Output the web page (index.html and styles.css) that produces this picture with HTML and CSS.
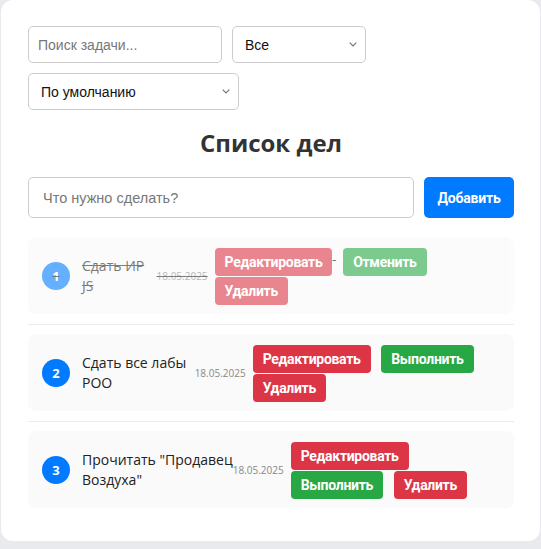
FILE: index.html
```html
<!DOCTYPE html>
<html lang="ru">
<head>
<meta charset="utf-8">
<title>Список дел</title>
<link rel="stylesheet" href="styles.css">
</head>
<body>
<div class="card">
  <div class="filters">
    <input class="search" type="text" placeholder="Поиск задачи...">
    <select class="filter"><option>Все</option><option>Активные</option><option>Выполненные</option></select>
    <select class="sort"><option>По умолчанию</option><option>По дате</option></select>
  </div>
  <h2 class="title">Список дел</h2>
  <div class="add-row">
    <input class="add-input" type="text" placeholder="Что нужно сделать?">
    <button class="btn-add">Добавить</button>
  </div>
  <ul class="list">
    <li class="item done">
      <div class="task">
        <span class="num">1</span>
        <span class="text">Сдать ИР JS</span>
        <span class="date">18.05.2025</span>
        <div class="actions"> <button class="btn btn-red">Редактировать</button> <button class="btn btn-green">Отменить</button> <button class="btn btn-red">Удалить</button> </div>
      </div>
    </li>
    <li class="item">
      <div class="task">
        <span class="num">2</span>
        <span class="text">Сдать все лабы РОО</span>
        <span class="date">18.05.2025</span>
        <div class="actions"> <button class="btn btn-red">Редактировать</button> <button class="btn btn-green">Выполнить</button> <button class="btn btn-red">Удалить</button> </div>
      </div>
    </li>
    <li class="item">
      <div class="task">
        <span class="num">3</span>
        <span class="text">Прочитать&nbsp;"Продавец Воздуха"</span>
        <span class="date">18.05.2025</span>
        <div class="actions"> <button class="btn btn-red">Редактировать</button> <button class="btn btn-green">Выполнить</button> <button class="btn btn-red">Удалить</button> </div>
      </div>
    </li>
  </ul>
</div>
</body>
</html>
```
FILE: styles.css
```css
body {
  margin: 0;
  background: #e9eaee;
  font-family: "Open Sans", "Noto Sans", sans-serif;
  color: #222;
}

.card {
  background: #fff;
  margin: 0 1px 6px;
  border-radius: 12px;
  padding: 26px 26px 33px 27px;
}

.filters {
  display: flex;
  flex-wrap: wrap;
  gap: 10px;
}

.search,
.filter,
.sort,
.add-input {
  box-sizing: border-box;
  border: 1px solid #ccc;
  border-radius: 5px;
  background-color: #fff;
  font-family: "Liberation Sans", Arial, sans-serif;
  color: #111;
}

.search {
  width: 194px;
  height: 37px;
  padding: 0 9px;
  font-size: 14px;
}

.filter,
.sort {
  appearance: none;
  -webkit-appearance: none;
  height: 37px;
  padding: 0 8px 0 12px;
  font-size: 14px;
  background-image: url("data:image/svg+xml,%3Csvg xmlns='http://www.w3.org/2000/svg' width='8' height='5' viewBox='0 0 8 5'%3E%3Cpath d='M0.7 0.7 L4 4 L7.3 0.7' fill='none' stroke='%23777' stroke-width='1.2'/%3E%3C/svg%3E");
  background-repeat: no-repeat;
  background-position: right 8px center;
  background-size: 8px 5px;
}

.filter { width: 134px; }
.sort { width: 211px; }

.search::placeholder,
.add-input::placeholder {
  color: #777;
}

.title {
  margin: 15px 0 17px;
  text-align: center;
  font-size: 24px;
  font-weight: 700;
  color: #333;
  line-height: 35px;
}

.add-row {
  display: flex;
  gap: 10px;
}

.add-input {
  flex: 1;
  height: 41px;
  padding: 0 14px;
  font-size: 14.5px;
}

.btn-add {
  width: 90px;
  height: 41px;
  border: 0;
  border-radius: 5px;
  background: #007bff;
  color: #fff;
  font: 700 14px Roboto, "Liberation Sans", Arial, sans-serif;
  letter-spacing: -0.2px;
}

.list {
  list-style: none;
  margin: 19px 0 0;
  padding: 0;
}

.item {
  padding-bottom: 10px;
  margin-bottom: 9px;
  border-bottom: 1px solid #ececec;
}

.item:last-child {
  padding-bottom: 0;
  margin-bottom: 0;
  border-bottom: 0;
}

.task {
  display: flex;
  align-items: center;
  padding: 10px 14px 9px;
  background: #fafafa;
  border-radius: 8px;
  font-size: 14px;
}

.done .task {
  opacity: 0.6;
  text-decoration: line-through;
}

.num {
  flex: none;
  width: 28px;
  height: 28px;
  margin-right: 12px;
  border-radius: 50%;
  background: #007bff;
  color: #fff;
  font-size: 13px;
  font-weight: 700;
  display: flex;
  align-items: center;
  justify-content: center;
}

.text {
  line-height: 20px;
}

.date {
  font-size: 10px;
  color: #888;
}

.actions {
  font-size: 14px;
  line-height: 0;
}

.btn {
  vertical-align: middle;
  height: 28px;
  margin: 1px 0 0 7px;
  padding: 0 10px;
  border: 0;
  border-radius: 4px;
  color: #fff;
  font: 700 14px Roboto, "Liberation Sans", Arial, sans-serif;
  letter-spacing: -0.3px;
}

.btn-red { background: #dc3545; }
.btn-green { background: #28a745; }
```
